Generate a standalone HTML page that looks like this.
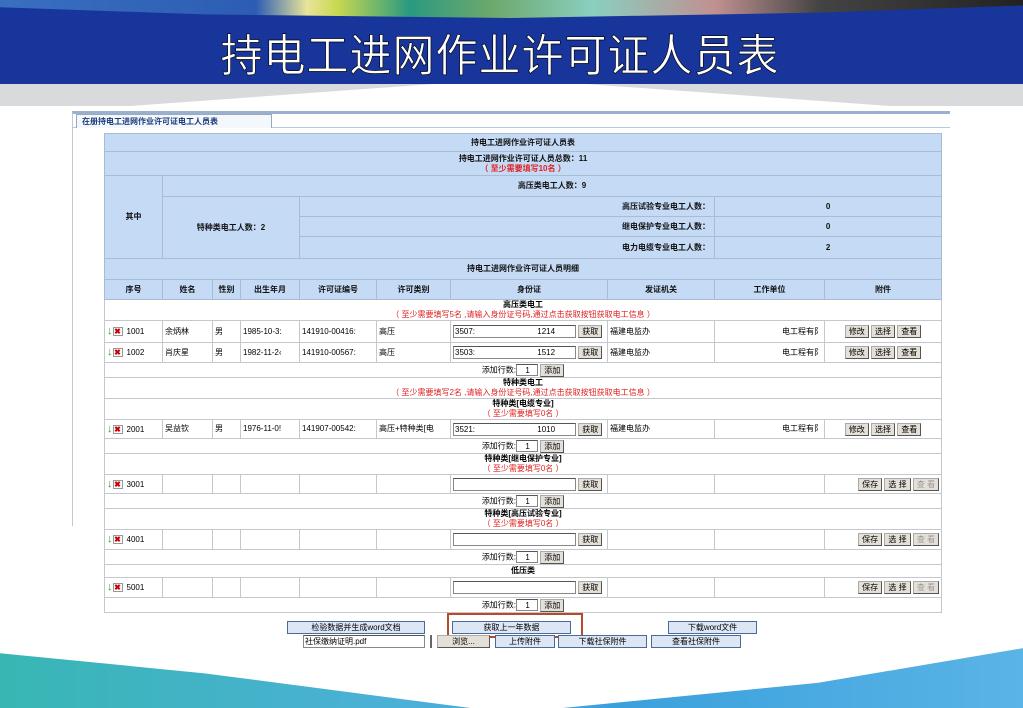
<!DOCTYPE html>
<html><head><meta charset="utf-8"><style>
*{margin:0;padding:0;box-sizing:border-box}
body{width:1023px;height:708px;overflow:hidden;background:#fff;position:relative;font-family:"Liberation Sans","Noto Sans CJK SC",sans-serif}
.abs{position:absolute}
#top{left:0;top:0;width:1023px;height:84px;background:#17359a}
#stripe{left:0;top:0;width:1023px;height:18px;background:linear-gradient(90deg,#3a6fc0 0%,#2c5db3 25%,#e9e49a 30%,#c8d850 33%,#2a9a80 40%,#6ca86c 48%,#8acfc0 58%,#c09090 70%,#444 80%,#222 100%);clip-path:polygon(0 0,100% 0,100% 30%,80% 70%,50% 100%,20% 80%,0 40%)}
#title{left:0;top:28px;width:1000px;text-align:center;color:#fff;font-size:42px;font-family:"Noto Sans CJK SC",sans-serif;line-height:50px;letter-spacing:1px;transform:scaleY(1.05);-webkit-text-stroke:0.6px #000}
#gray{left:0;top:84px;width:1023px;height:22px;background:#d9dadb}
#wedge{left:130px;top:84px;width:760px;height:22px;background:#fff;clip-path:polygon(40% 0,60% 0,100% 100%,0 100%)}
#bot{left:0;top:645px;width:1023px;height:63px;background:linear-gradient(90deg,#38b6b4,#4cb0d8 40%,#3aa0dc 60%,#5ab4e6);clip-path:polygon(0 13%,20% 45%,46% 100%,55% 100%,80% 60%,100% 5%,100% 100%,0 100%)}
#panel{left:72px;top:111px;width:878px;height:415px;border-top:3px solid #9ab0d0;border-left:1px solid #c0c8d8}
#tab{left:76px;top:114px;width:196px;height:14px;border:1px solid #9ab;border-bottom:none;background:#f4f7fb;font-size:8px;font-weight:bold;color:#1a3a7a;line-height:13px;padding-left:5px}
#tabline{left:72px;top:127px;width:878px;height:1px;background:#b8c8dc}
table{position:absolute;left:104px;top:133px;width:837px;border-collapse:collapse;table-layout:fixed;font-size:8px}
td{border:1px solid #c4c8cc;white-space:nowrap;overflow:hidden;padding:0 2px;line-height:10px}
.h td,td.h{background:#c5daf5;border-color:#a9bcd4;font-weight:bold;text-align:center;color:#111}
.r{color:#e02020;font-weight:normal}
.c{text-align:center}
.g{color:#3a9a30;font-weight:bold;font-size:11px}
.x{display:inline-block;width:10px;height:9px;border:1px solid #999;color:#c00;font-size:8px;line-height:7px;text-align:center;vertical-align:middle;margin-right:4px;font-weight:bold}
.inp{display:inline-block;border:1px solid #888;border-top-color:#555;background:#fff;height:13px;vertical-align:middle;font-size:8px;line-height:11px;padding-left:1px}
.btn{display:inline-block;background:#e4e0d8;border:1px solid #aaa;border-right-color:#555;border-bottom-color:#555;height:13px;font-size:8px;line-height:11px;padding:0 3px;vertical-align:middle}
.bb{position:absolute;background:#dde6f5;border:1px solid #4a6a9a;font-size:8px;text-align:center;line-height:11px;height:13px}
</style></head><body>
<div id="top" class="abs"></div>
<div id="stripe" class="abs"></div>
<div id="title" class="abs">持电工进网作业许可证人员表</div>
<div id="gray" class="abs"></div>
<div id="wedge" class="abs"></div>
<div id="bot" class="abs"></div>
<div id="panel" class="abs"></div>
<div id="tabline" class="abs"></div>
<div id="tab" class="abs">在册持电工进网作业许可证电工人员表</div>

<table>
<colgroup><col style="width:58px"><col style="width:50px"><col style="width:28px"><col style="width:59px"><col style="width:77px"><col style="width:74px"><col style="width:157px"><col style="width:107px"><col style="width:110px"><col style="width:117px"></colgroup>
<tr class="h" style="height:18px"><td colspan="10">持电工进网作业许可证人员表</td></tr>
<tr class="h" style="height:24px"><td colspan="10">持电工进网作业许可证人员总数：11<br><span class="r" style="font-weight:bold">（ 至少需要填写10名 ）</span></td></tr>
<tr class="h" style="height:21px"><td rowspan="4">其中</td><td colspan="9">高压类电工人数：9</td></tr>
<tr class="h" style="height:20px"><td colspan="3" rowspan="3">特种类电工人数：2</td><td colspan="4" style="text-align:right;padding-right:4px">高压试验专业电工人数：</td><td colspan="2">0</td></tr>
<tr class="h" style="height:20px"><td colspan="4" style="text-align:right;padding-right:4px">继电保护专业电工人数：</td><td colspan="2">0</td></tr>
<tr class="h" style="height:22px"><td colspan="4" style="text-align:right;padding-right:4px">电力电缆专业电工人数：</td><td colspan="2">2</td></tr>
<tr class="h" style="height:21px"><td colspan="10">持电工进网作业许可证人员明细</td></tr>
<tr class="h" style="height:20px"><td>序号</td><td>姓名</td><td>性别</td><td>出生年月</td><td>许可证编号</td><td>许可类别</td><td>身份证</td><td>发证机关</td><td>工作单位</td><td>附件</td></tr>
<tr style="height:21px"><td colspan="10" class="c"><b>高压类电工</b><br><span class="r">（ 至少需要填写5名 ,请输入身份证号码,通过点击获取按钮获取电工信息 ）</span></td></tr>
<tr style="height:22px"><td><span class="g">↓</span><span class="x">✖</span>1001</td><td>余炳林</td><td>男</td><td>1985-10-3:</td><td>141910-00416:</td><td>高压</td><td><span class="inp" style="width:123px">3507: <span style="margin-left:60px">1214</span></span> <span class="btn">获取</span></td><td>福建电监办</td><td style="text-align:right">电工程有阝</td><td class="c"><span class="btn">修改</span> <span class="btn">选择</span> <span class="btn">查看</span></td></tr>
<tr style="height:20px"><td><span class="g">↓</span><span class="x">✖</span>1002</td><td>肖庆星</td><td>男</td><td>1982-11-2‹</td><td>141910-00567:</td><td>高压</td><td><span class="inp" style="width:123px">3503: <span style="margin-left:60px">1512</span></span> <span class="btn">获取</span></td><td>福建电监办</td><td style="text-align:right">电工程有阝</td><td class="c"><span class="btn">修改</span> <span class="btn">选择</span> <span class="btn">查看</span></td></tr>
<tr style="height:15px"><td colspan="10" class="c">添加行数:<span class="inp" style="width:22px;height:12px">1</span> <span class="btn">添加</span></td></tr>
<tr style="height:21px"><td colspan="10" class="c"><b>特种类电工</b><br><span class="r">（ 至少需要填写2名 ,请输入身份证号码,通过点击获取按钮获取电工信息 ）</span></td></tr>
<tr style="height:19px"><td colspan="10" class="c"><b>特种类[电缆专业]</b><br><span class="r">（ 至少需要填写0名 ）</span></td></tr>
<tr style="height:19px"><td><span class="g">↓</span><span class="x">✖</span>2001</td><td>吴益钦</td><td>男</td><td>1976-11-0!</td><td>141907-00542:</td><td>高压+特种类[电</td><td><span class="inp" style="width:123px">3521: <span style="margin-left:60px">1010</span></span> <span class="btn">获取</span></td><td>福建电监办</td><td style="text-align:right">电工程有阝</td><td class="c"><span class="btn">修改</span> <span class="btn">选择</span> <span class="btn">查看</span></td></tr>
<tr style="height:15px"><td colspan="10" class="c">添加行数:<span class="inp" style="width:22px;height:12px">1</span> <span class="btn">添加</span></td></tr>
<tr style="height:21px"><td colspan="10" class="c"><b>特种类[继电保护专业]</b><br><span class="r">（ 至少需要填写0名 ）</span></td></tr>
<tr style="height:19px"><td><span class="g">↓</span><span class="x">✖</span>3001</td><td></td><td></td><td></td><td></td><td></td><td><span class="inp" style="width:123px"></span> <span class="btn">获取</span></td><td></td><td></td><td style="text-align:right"><span class="btn">保存</span> <span class="btn">选 择</span> <span class="btn" style="color:#999">查 看</span></td></tr>
<tr style="height:15px"><td colspan="10" class="c">添加行数:<span class="inp" style="width:22px;height:12px">1</span> <span class="btn">添加</span></td></tr>
<tr style="height:21px"><td colspan="10" class="c"><b>特种类[高压试验专业]</b><br><span class="r">（ 至少需要填写0名 ）</span></td></tr>
<tr style="height:20px"><td><span class="g">↓</span><span class="x">✖</span>4001</td><td></td><td></td><td></td><td></td><td></td><td><span class="inp" style="width:123px"></span> <span class="btn">获取</span></td><td></td><td></td><td style="text-align:right"><span class="btn">保存</span> <span class="btn">选 择</span> <span class="btn" style="color:#999">查 看</span></td></tr>
<tr style="height:15px"><td colspan="10" class="c">添加行数:<span class="inp" style="width:22px;height:12px">1</span> <span class="btn">添加</span></td></tr>
<tr style="height:13px"><td colspan="10" class="c"><b>低压类</b></td></tr>
<tr style="height:20px"><td><span class="g">↓</span><span class="x">✖</span>5001</td><td></td><td></td><td></td><td></td><td></td><td><span class="inp" style="width:123px"></span> <span class="btn">获取</span></td><td></td><td></td><td style="text-align:right"><span class="btn">保存</span> <span class="btn">选 择</span> <span class="btn" style="color:#999">查 看</span></td></tr>
<tr style="height:15px"><td colspan="10" class="c">添加行数:<span class="inp" style="width:22px;height:12px">1</span> <span class="btn">添加</span></td></tr>
</table>

<div class="bb" style="left:287px;top:621px;width:138px">检验数据并生成word文档</div>
<div class="bb" style="left:452px;top:621px;width:119px">获取上一年数据</div>
<div class="abs" style="left:447px;top:613px;width:136px;height:25px;border:2px solid #b84a2a"></div>
<div class="bb" style="left:668px;top:621px;width:89px">下载word文件</div>
<div class="abs inp" style="left:303px;top:635px;width:122px;height:13px;font-size:8px">社保缴纳证明.pdf</div>
<div class="abs" style="left:430px;top:635px;width:2px;height:13px;background:#666"></div>
<div class="abs btn" style="left:437px;top:635px;width:53px;text-align:center">浏览...</div>
<div class="bb" style="left:495px;top:635px;width:60px">上传附件</div>
<div class="bb" style="left:558px;top:635px;width:89px">下载社保附件</div>
<div class="bb" style="left:651px;top:635px;width:90px">查看社保附件</div>
</body></html>
